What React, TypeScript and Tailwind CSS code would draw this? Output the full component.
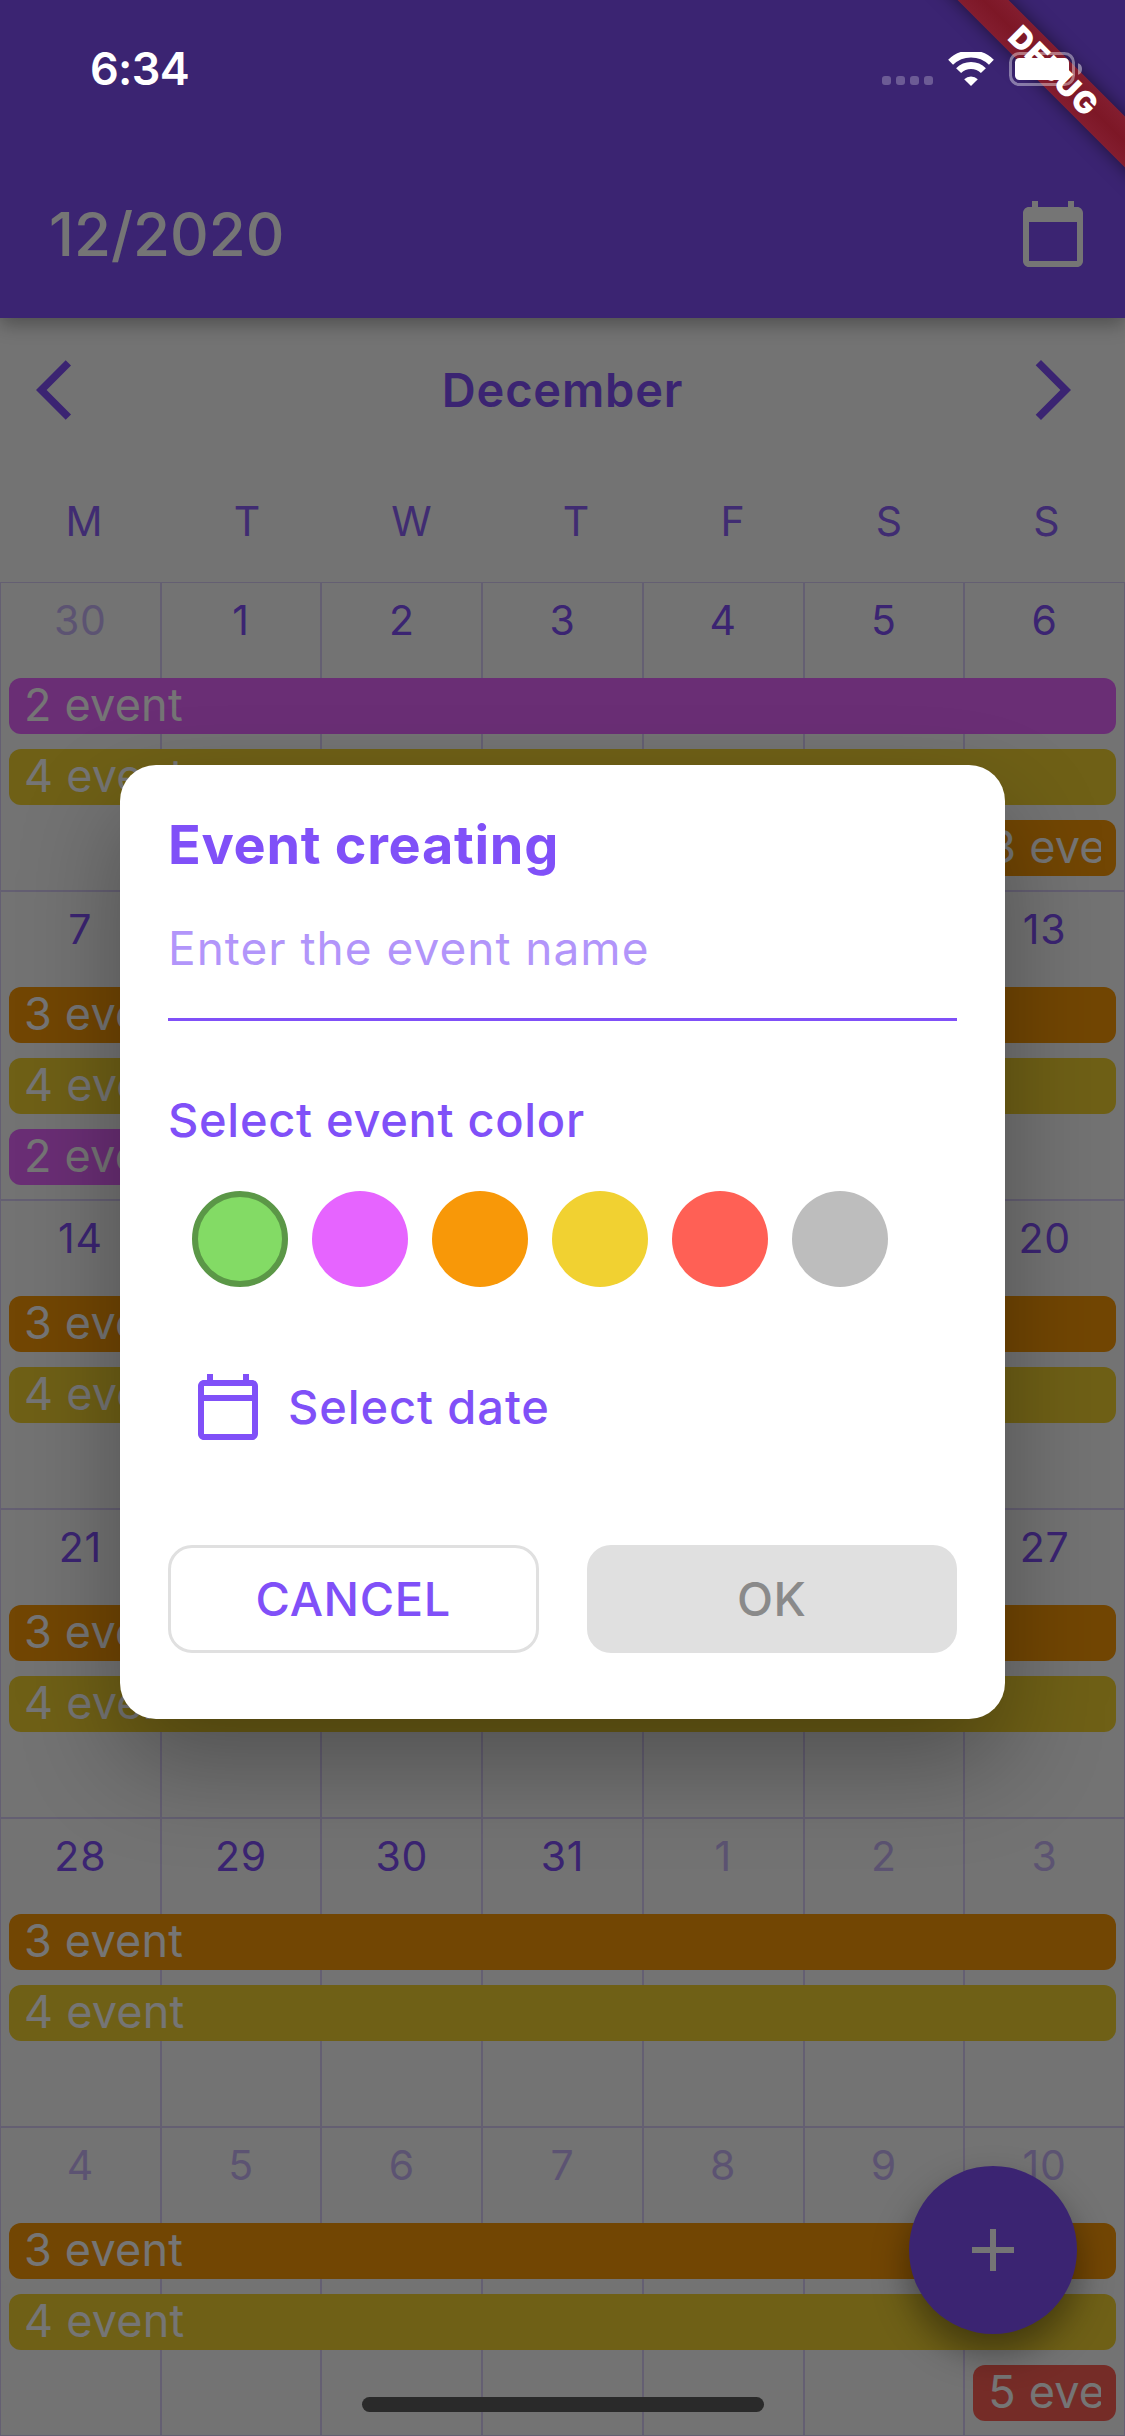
import React from 'react';

const CALENDAR_FILLED =
  'M20 3h-1V1h-2v2H7V1H5v2H4c-1.1 0-2 .9-2 2v16c0 1.1.9 2 2 2h16c1.1 0 2-.9 2-2V5c0-1.1-.9-2-2-2zm0 18H4V8h16v13z';
const CALENDAR_OUTLINED =
  'M20 3h-1V1h-2v2H7V1H5v2H4c-1.1 0-2 .9-2 2v16c0 1.1.9 2 2 2h16c1.1 0 2-.9 2-2V5c0-1.1-.9-2-2-2zm0 18H4V10h16v11zm0-13H4V5h16v3z';
const ARROW_BACK = 'M11.67 3.87L9.9 2.1 0 12l9.9 9.9 1.77-1.77L3.54 12z';
const ARROW_FORWARD = 'M6.23 20.23L8 22l10-10L8 2 6.23 3.77 14.46 12z';
const PLUS = 'M19 13h-6v6h-2v-6H5v-2h6V5h2v6h6v2z';

function Icon({ path }: { path: string }) {
  return (
    <svg viewBox="0 0 24 24" className="size-[72px] shrink-0 fill-current">
      <path d={path} />
    </svg>
  );
}

type CalendarEvent = { label: string; color: string; span: string };
type Week = { days: number[]; outside: (day: number) => boolean; events: CalendarEvent[] };

const FULL = 'col-start-1 col-span-7';
const LAST = 'col-start-7 col-span-1';
const orange = (span: string): CalendarEvent => ({ label: '3 event', color: 'bg-[#f89808]', span });
const yellow: CalendarEvent = { label: '4 event', color: 'bg-[#f1d131]', span: FULL };
const pink = (span: string): CalendarEvent => ({ label: '2 event', color: 'bg-[#e664ff]', span });
const red: CalendarEvent = { label: '5 event', color: 'bg-[#ff6055]', span: LAST };

const none = () => false;
const WEEKS: Week[] = [
  { days: [30, 1, 2, 3, 4, 5, 6], outside: (d) => d === 30, events: [pink(FULL), yellow, orange(LAST)] },
  { days: [7, 8, 9, 10, 11, 12, 13], outside: none, events: [orange(FULL), yellow, pink('col-start-1 col-span-2')] },
  { days: [14, 15, 16, 17, 18, 19, 20], outside: none, events: [orange(FULL), yellow] },
  { days: [21, 22, 23, 24, 25, 26, 27], outside: none, events: [orange(FULL), yellow] },
  { days: [28, 29, 30, 31, 1, 2, 3], outside: (d) => d < 10, events: [orange(FULL), yellow] },
  { days: [4, 5, 6, 7, 8, 9, 10], outside: () => true, events: [orange(FULL), yellow, red] },
];

function WeekRow({ week }: { week: Week }) {
  return (
    <div className="grid h-[309px]">
      <div className="grid grid-cols-7 [grid-area:1/1]">
        {week.days.map((day) => (
          <div
            key={day}
            className="flex justify-center border border-[#8050f8]/25 pt-[7px] text-[41px] leading-[60px] tracking-[0.8px]"
          >
            <span className={week.outside(day) ? 'opacity-40' : ''}>{day}</span>
          </div>
        ))}
      </div>
      <div className="grid grid-cols-7 content-start gap-y-[15.6px] pt-24 [grid-area:1/1]">
        {week.events.map((event) => (
          <div key={event.label} className={`px-[9px] ${event.span}`}>
            <div className={`h-[55.5px] rounded-xl px-[15px] ${event.color}`}>
              <div className="overflow-hidden whitespace-nowrap text-[45px] leading-[54px] tracking-[0.2px] text-white">
                {event.label}
              </div>
            </div>
          </div>
        ))}
      </div>
    </div>
  );
}

function CalendarPage() {
  return (
    <div className="flex h-full flex-col bg-[#fafafa] text-[#8050f8]">
      <header className="z-10 flex h-[318px] shrink-0 items-end justify-between bg-[#8050f8] pr-9 pb-12 pl-[49px] text-white shadow-[0_6px_18px_rgba(0,0,0,0.32)]">
        <h1 className="text-[60px] leading-[72px] font-medium">12/2020</h1>
        <Icon path={CALENDAR_FILLED} />
      </header>
      <div className="flex h-36 shrink-0 items-center justify-between px-9">
        <Icon path={ARROW_BACK} />
        <h2 className="text-[47px] font-semibold tracking-[0.8px]">December</h2>
        <Icon path={ARROW_FORWARD} />
      </div>
      <div className="flex h-[120px] shrink-0 items-center justify-around text-[41px] opacity-90">
        {['M', 'T', 'W', 'T', 'F', 'S', 'S'].map((d, i) => (
          <span key={i}>{d}</span>
        ))}
      </div>
      <div className="flex flex-col">
        {WEEKS.map((week, i) => (
          <WeekRow key={i} week={week} />
        ))}
      </div>
      <button className="absolute right-12 bottom-[102px] flex size-[168px] items-center justify-center rounded-full bg-[#8050f8] text-white shadow-[0_18px_36px_rgba(0,0,0,0.4)]">
        <Icon path={PLUS} />
      </button>
    </div>
  );
}

const SWATCHES = [
  'bg-[#83db65] border-[6px] border-[#5b9747]',
  'bg-[#e664ff]',
  'bg-[#f89808]',
  'bg-[#f1d131]',
  'bg-[#ff6055]',
  'bg-[#bdbdbd]',
];

function EventDialog() {
  return (
    <div className="flex h-[954px] w-[885px] flex-col rounded-[36px] bg-white px-12 pt-12 text-[46px] text-[#8050f8] shadow-[0_45px_100px_rgba(0,0,0,0.3)]">
      <h3 className="text-[54px] leading-[64px] font-bold tracking-[0.7px]">Event creating</h3>
      <div className="mt-[41px] border-b-[3px] border-[#8050f8] pb-10 leading-[60px] tracking-[1px]">
        <span className="opacity-60">Enter the event name</span>
      </div>
      <p className="mt-[69px] text-[47px] leading-[60px] font-medium tracking-[0.7px]">Select event color</p>
      <div className="mt-[41px] flex gap-6 px-6">
        {SWATCHES.map((swatch) => (
          <span key={swatch} className={`size-24 rounded-full ${swatch}`} />
        ))}
      </div>
      <div className="mt-[84px] flex items-center gap-6 px-6">
        <Icon path={CALENDAR_OUTLINED} />
        <span className="text-[47px] leading-[60px] font-medium tracking-[0.9px]">Select date</span>
      </div>
      <div className="mt-[102px] grid h-[108px] grid-cols-2 gap-12 text-[47px] font-medium tracking-[0.6px]">
        <button className="rounded-3xl border-[3px] border-[#e0e0e0]">CANCEL</button>
        <button className="rounded-3xl bg-[#e0e0e0] text-[#8a8a8a]">OK</button>
      </div>
    </div>
  );
}

function DebugBanner() {
  return (
    <div className="absolute top-0 right-0 size-[240px] overflow-hidden">
      <div className="absolute top-[53px] left-[19px] flex h-9 w-[300px] rotate-45 items-center justify-center bg-linear-to-b from-[#831d2f] via-[#7d1726] to-[#831d2f] text-[30.5px] leading-9 font-black tracking-[1.3px] text-white shadow-[0_0_18px_rgba(0,0,0,0.5)]">
        DEBUG
      </div>
    </div>
  );
}

function StatusBar() {
  return (
    <div className="absolute inset-x-0 top-0 flex h-[138px] items-center justify-between pr-[43px] pl-[90px] text-white">
      <span className="text-[45px] font-semibold tracking-[-0.7px]">6:34</span>
      <div className="flex items-center">
        <div className="mt-[23px] flex gap-[5px]">
          {[0, 1, 2, 3].map((i) => (
            <span key={i} className="size-[9px] rounded-[3px] bg-white/25" />
          ))}
        </div>
        <svg viewBox="0 0 46 34" className="ml-[15px] h-[34px] w-[46px]">
          <g fill="none" stroke="#fff" strokeWidth="7">
            <path d="M2.6 10.2A29.2 29.2 0 0 1 43.4 10.2" />
            <path d="M10.6 18.6A17.4 17.4 0 0 1 35.4 18.6" />
          </g>
          <path d="M23 34L16.2 27.2A9.6 9.6 0 0 1 29.8 27.2Z" fill="#fff" />
        </svg>
        <svg viewBox="0 0 73 34" className="ml-[15px] h-[34px] w-[73px]">
          <rect x="1.5" y="1.5" width="63" height="31" rx="9" fill="none" stroke="#fff" strokeOpacity="0.4" strokeWidth="3" />
          <rect x="6" y="6" width="54" height="22" rx="4.5" fill="#fff" />
          <path d="M69 11.2Q73 12.5 73 17T69 22.8Z" fill="#fff" fillOpacity="0.45" />
        </svg>
      </div>
    </div>
  );
}

export default function App() {
  return (
    <div className="relative h-[2436px] w-[1125px] overflow-hidden font-['Inter',sans-serif]">
      <CalendarPage />
      <div className="absolute inset-0 z-20 flex justify-center bg-black/54 pt-[765px]">
        <EventDialog />
      </div>
      <div className="absolute inset-0 z-30">
        <DebugBanner />
        <StatusBar />
        <div className="absolute bottom-6 left-[362px] h-[15px] w-[402px] rounded-full bg-[#2a2a2a]" />
      </div>
    </div>
  );
}
